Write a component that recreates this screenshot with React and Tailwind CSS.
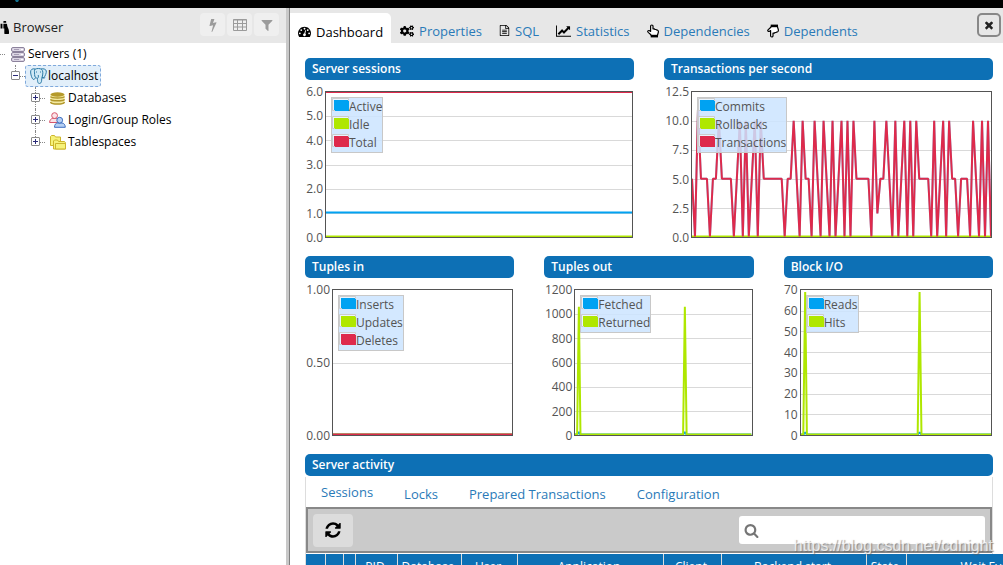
import React from "react";
import { FaCogs, FaBinoculars } from "react-icons/fa";

const GLYPHS = {
  dashboard:
    "M384 1152q0-53-37.5-90.5t-90.5-37.5-90.5 37.5-37.5 90.5 37.5 90.5 90.5 37.5 90.5-37.5 37.5-90.5zm192-448q0-53-37.5-90.5t-90.5-37.5-90.5 37.5-37.5 90.5 37.5 90.5 90.5 37.5 90.5-37.5 37.5-90.5zm428 481l101-382q6-26-7.5-48.5t-38.5-29.5-48 6.5-30 39.5l-101 382q-60 5-107 43.5t-63 98.5q-20 77 20 146t117 89 146-20 89-117q16-60-6-117t-72-91zm660-33q0-53-37.5-90.5t-90.5-37.5-90.5 37.5-37.5 90.5 37.5 90.5 90.5 37.5 90.5-37.5 37.5-90.5zm-640-640q0-53-37.5-90.5t-90.5-37.5-90.5 37.5-37.5 90.5 37.5 90.5 90.5 37.5 90.5-37.5 37.5-90.5zm448 192q0-53-37.5-90.5t-90.5-37.5-90.5 37.5-37.5 90.5 37.5 90.5 90.5 37.5 90.5-37.5 37.5-90.5zm320 448q0 261-141 483-19 29-54 29h-1402q-35 0-54-29-141-221-141-483 0-182 71-348t191-286 286-191 348-71 348 71 286 191 191 286 71 348z",
  file:
    "M1596 380q28 28 48 76t20 88v1152q0 40-28 68t-68 28h-1344q-40 0-68-28t-28-68v-1600q0-40 28-68t68-28h896q40 0 88 20t76 48zm-444-244v376h376q-10-29-22-41l-313-313q-12-12-41-22zm384 1528v-1024h-416q-40 0-68-28t-28-68v-416h-768v1536h1280zm-1024-864q0-14 9-23t23-9h704q14 0 23 9t9 23v64q0 14-9 23t-23 9h-704q-14 0-23-9t-9-23v-64zm736 224q14 0 23 9t9 23v64q0 14-9 23t-23 9h-704q-14 0-23-9t-9-23v-64q0-14 9-23t23-9h704zm0 256q14 0 23 9t9 23v64q0 14-9 23t-23 9h-704q-14 0-23-9t-9-23v-64q0-14 9-23t23-9h704z",
  chart:
    "M2048 1536v128h-2048v-1536h128v1408h1920zm-128-1248v435q0 21-19.5 29.5t-35.5-7.5l-121-121-633 633q-10 10-23 10t-23-10l-233-233-416 416-192-192 585-585q10-10 23-10t23 10l233 233 464-464-121-121q-16-16-7.5-35.5t29.5-19.5h435q14 0 23 9t9 23z",
  filter:
    "M1595 295q17 41-14 70l-493 493v742q0 42-39 59-13 5-25 5-27 0-45-19l-256-256q-19-19-19-45v-486l-493-493q-31-29-14-70 17-39 59-39h1280q42 0 59 39z",
  bolt:
    "M1333 566q18 20 7 44l-540 1157q-13 25-42 25-4 0-14-2-17-5-25.5-19t-4.5-30l197-808-406 101q-4 1-12 1-18 0-31-11-18-15-13-39l201-825q4-14 16-23t28-9h328q19 0 32 12.5t13 29.5q0 8-5 18l-171 463 396-98q8-2 12-2 19 0 34 15z",
  times:
    "M1490 1322q0 40-28 68l-136 136q-28 28-68 28t-68-28l-294-294-294 294q-28 28-68 28t-68-28l-136-136q-28-28-28-68t28-68l294-294-294-294q-28-28-28-68t28-68l136-136q28-28 68-28t68 28l294 294 294-294q28-28 68-28t68 28l136 136q28 28 28 68t-28 68l-294 294 294 294q28 28 28 68z",
  refresh:
    "M1639 1056q0 5-1 7-64 268-268 434.5t-478 166.5q-146 0-282.5-55t-243.5-157l-129 129q-19 19-45 19t-45-19-19-45v-448q0-26 19-45t45-19h448q26 0 45 19t19 45-19 45l-137 137q71 66 161 102t187 36q134 0 250-65t186-179q11-17 53-117 8-23 30-23h192q13 0 22.5 9.5t9.5 22.5zm25-800v448q0 26-19 45t-45 19h-448q-26 0-45-19t-19-45 19-45l138-138q-148-137-349-137-134 0-250 65t-186 179q-11 17-53 117-8 23-30 23h-199q-13 0-22.5-9.5t-9.5-22.5v-7q65-268 270-434.5t480-166.5q146 0 284 55.5t245 156.5l130-129q19-19 45-19t45 19 19 45z",
  search:
    "M1216 832q0-185-131.5-316.5t-316.5-131.5-316.5 131.5-131.5 316.5 131.5 316.5 316.5 131.5 316.5-131.5 131.5-316.5zm512 832q0 52-38 90t-90 38q-54 0-90-38l-343-342q-179 124-399 124-143 0-273.5-55.5t-225-150-150-225-55.5-273.5 55.5-273.5 150-225 225-150 273.5-55.5 273.5 55.5 225 150 150 225 55.5 273.5q0 220-124 399l343 343q37 37 37 90z",
};

function Glyph({ name, className, wide }) {
  return (
    <svg className={className} viewBox={wide ? "0 0 2048 1792" : "0 0 1792 1792"} fill="currentColor" aria-hidden="true">
      <path d={GLYPHS[name]} />
    </svg>
  );
}

function Hand({ down }) {
  return (
    <svg className={down ? "h-[14px] w-3 -scale-y-100" : "h-[14px] w-3"} viewBox="0 0 12 14" aria-hidden="true">
      <path
        d="M3.6 7.4V2.2a1.2 1.2 0 0 1 2.4 0v2.6l1.4.1.4.5 1.4.1.3.5 1.1.2c.5.2.8.6.8 1.2 0 1.900-.9 2.600-.9 4.100H4.300C3.700 10.200 2 9.400.9 8c-.5-.9.3-1.700 1.300-1.400z"
        fill="#fff"
        stroke="#000"
        strokeWidth="1.200"
        strokeLinejoin="round"
      />
      <path d="M3.700 10.800h7.300v2.600H3.700z" fill="#000" />
    </svg>
  );
}

function TableGlyph() {
  return (
    <svg className="h-3 w-[14px]" viewBox="0 0 14 12" fill="none" stroke="currentColor" aria-hidden="true">
      <path d="M.5.500h13v11H.5zM.5 1h13M.5 4.500h13M.5 8h13M4.500 1v10.500M9.500 1v10.500" />
    </svg>
  );
}

function ServersIcon() {
  return (
    <svg className="h-[15px] w-[14px]" viewBox="0 0 14 15" aria-hidden="true">
      {[0.5, 5.500, 10.500].map((y) => (
        <g key={y}>
          <rect x=".5" y={y} width="13" height="4" rx="1.500" fill="#dcd6e4" stroke="#8c829c" />
          <path d={`M3 ${y + 2}h5`} stroke="#a79db5" />
          <path d={`M10 ${y + 2}h2`} stroke="#fff" />
        </g>
      ))}
    </svg>
  );
}

function PostgresIcon() {
  return (
    <svg className="h-4 w-[17px]" viewBox="0 0 17 16" fill="#cfe9f6" stroke="#2e7ba6" strokeLinejoin="round" aria-hidden="true">
      <path d="M5 1C2.500.3.500 1.500.600 4c.1 2.500 1.200 6.500 2.600 7.400 1.100.500 2-1 2.600-2z" />
      <path d="M11 1c2-.7 5 .1 5.300 2 .3 2-1.200 5.200-2.500 6.700l-1.800.2z" />
      <path d="M5 1.200C7 .2 10 .200 11.700 1.400c1.300 1.300 1.400 4 .700 6.600l-.700 2.600c0 2-.1 4.600-1.900 4.900-1.900.3-2.300-1.500-2.400-5.200C5.900 10 4.500 9 4.600 6.500 4.600 4.300 4 2.500 5 1.200z" />
      <path d="M7.500 10.300c1.200-.600 1-2 .7-3.300M12.200 9.600c1 .6 2.400.4 3 0M6 4h1M10 4h1" fill="none" />
    </svg>
  );
}

function DatabasesIcon() {
  return (
    <svg className="h-[13px] w-[15px]" viewBox="0 0 15 13" aria-hidden="true">
      <path d="M.5 2.500v8c0 1 3 2 7 2s7-1 7-2v-8z" fill="#f3e9a0" />
      <ellipse cx="7.500" cy="2.500" rx="7" ry="2.200" fill="#b59a2b" />
      <path
        d="M.5 4.500c1 2 13 2 14 0M.5 7.300c1 2 13 2 14 0M.5 10c1 2.700 13 2.700 14 0"
        fill="none"
        stroke="#b1972c"
        strokeWidth="1.500"
      />
    </svg>
  );
}

function RolesIcon() {
  return (
    <svg className="h-4 w-[17px]" viewBox="0 0 17 16" aria-hidden="true">
      <g fill="#fbe3e7" stroke="#d5566c">
        <path d="M.6 10.500c0-2.500 1.500-4 3-4h4c1.500 0 2.500 1.500 2.500 4z" />
        <circle cx="5.600" cy="3.600" r="2.900" />
      </g>
      <g fill="#b7d0f3" stroke="#3f6fc0">
        <path d="M5.500 15.300c0-2.500 1.200-4.300 3-4.300h4.500c1.800 0 3.300 1.800 3.300 4.300z" />
        <circle cx="10.700" cy="8.200" r="2.900" />
      </g>
    </svg>
  );
}

function FoldersIcon() {
  return (
    <svg className="h-[15px] w-4" viewBox="0 0 16 15" fill="#f6f27a" stroke="#cdb52c" strokeLinejoin="round" aria-hidden="true">
      <path d="M.5 10.500v-9l1-1h3l1 1.500h5v8.500z" />
      <path d="M3.500 14V6l1-1h3l1 1.500h6l.8.800V14z" />
      <path d="M5.500 14V8.500h10V14z" />
    </svg>
  );
}

function Expander({ open, above, below }) {
  return (
    <span className="flex h-[22px] w-[9px] flex-col items-center">
      <span className={above ? "h-[6px] w-0 border-l border-dotted border-[#888]" : "h-[6px] w-0"} />
      <button
        type="button"
        aria-label={open ? "Collapse" : "Expand"}
        className="flex h-[9px] w-[9px] items-center justify-center rounded-[1px] border border-[#8a8a8a] bg-white"
      >
        <svg className="h-[5px] w-[5px]" viewBox="0 0 5 5" stroke="#2b2b78" aria-hidden="true">
          <path d={open ? "M0 2.500h5" : "M0 2.500h5M2.500 0v5"} />
        </svg>
      </button>
      <span className={below ? "w-0 flex-1 border-l border-dotted border-[#888]" : "w-0 flex-1"} />
    </span>
  );
}

function Branch() {
  return <span className="w-[5px] border-t border-dotted border-[#888]" />;
}

const NODES = [
  { label: "Databases", Icon: DatabasesIcon },
  { label: "Login/Group Roles", Icon: RolesIcon },
  { label: "Tablespaces", Icon: FoldersIcon },
];

function Sidebar() {
  const tool = "flex h-[23px] w-[25px] items-center justify-center rounded bg-[#efefef] text-[#9b9b9b]";
  return (
    <aside className="flex w-[286px] shrink-0 flex-col bg-white">
      <header className="flex h-[35px] items-start bg-[#e7e7e7] pr-[7px] pt-[5px]">
        <span className="flex h-7 min-w-0 flex-1 items-center gap-1 overflow-hidden">
          <FaBinoculars className="-ml-[6px] h-[15px] w-[15px] shrink-0" />
          <h2 className="text-[#222]">Browser</h2>
        </span>
        <span className="flex gap-[2px]">
          <button type="button" aria-label="Query tool" className={tool}>
            <Glyph name="bolt" className="h-[14px] w-[14px]" />
          </button>
          <button type="button" aria-label="View data" className={tool}>
            <TableGlyph />
          </button>
          <button type="button" aria-label="Filtered rows" className={tool}>
            <Glyph name="filter" className="h-[14px] w-[14px]" />
          </button>
        </span>
      </header>
      <ul className="text-xs text-black">
        <li>
          <div className="flex h-[22px] items-center">
            <Branch />
            <span className="flex w-[23px] justify-center pl-[2px]">
              <ServersIcon />
            </span>
            Servers (1)
          </div>
          <ul>
            <li>
              <div className="flex h-[22px] items-center pl-[11px]">
                <Expander open above />
                <Branch />
                <span className="flex h-[22px] items-center gap-[1px] rounded-[3px] border border-dashed border-[#7fa9dc] bg-[#e2effa] pl-1 pr-[2px]">
                  <PostgresIcon />
                  localhost
                </span>
              </div>
              <ul>
                {NODES.map(({ label, Icon }, i) => (
                  <li key={label} className="flex h-[22px] items-center pl-[31px]">
                    <Expander above below={i < NODES.length - 1} />
                    <Branch />
                    <span className="flex w-[23px] justify-center pl-[2px]">
                      <Icon />
                    </span>
                    {label}
                  </li>
                ))}
              </ul>
            </li>
          </ul>
        </li>
      </ul>
    </aside>
  );
}

const TABS = [
  { label: "Properties", icon: <FaCogs className="h-[14px] w-[14px] text-black" /> },
  { label: "SQL", icon: <Glyph name="file" className="h-[13px] w-[11px] text-black" /> },
  { label: "Statistics", icon: <Glyph name="chart" wide className="h-[14px] w-[15px] text-black" /> },
  { label: "Dependencies", icon: <Hand /> },
  { label: "Dependents", icon: <Hand down /> },
];

function TabBar() {
  return (
    <nav className="flex h-[35px] items-start bg-[#e7e7e7] pt-[5px]">
      <a href="#dashboard" className="flex h-[30px] items-center gap-[5px] rounded-tr-[5px] bg-white pl-2 pr-2 pt-[7px] leading-[18px] text-black">
        <Glyph name="dashboard" className="h-[13px] w-[13px]" />
        Dashboard
      </a>
      <span className="flex h-[30px] flex-1 items-center gap-[17px] pl-[9px] pt-[5px]">
        {TABS.map((t) => (
          <a key={t.label} href={`#${t.label.toLowerCase()}`} className="flex items-center gap-[5px] text-[#2a7ab8]">
            {t.icon}
            {t.label}
          </a>
        ))}
      </span>
      <button
        type="button"
        aria-label="Close panel"
        className="mr-[2px] flex h-6 w-6 items-center justify-center rounded-[5px] border-2 border-[#888] text-[#222]"
      >
        <Glyph name="times" className="h-3 w-3" />
      </button>
    </nav>
  );
}

const BLUE = "#00a2f2";
const LIME = "#afe700";
const RED = "#de2a4c";

const TPS = [
  5, 0, 11, 5, 5, 5, 0, 5, 5, 10, 5, 5, 5, 5, 0, 5, 10, 0, 10, 0, 5, 10, 0, 10, 5, 5, 5, 5, 5, 5, 5, 0, 5, 5, 10, 5, 0,
  10, 5, 5, 0, 10, 5, 0, 10, 5, 0, 10, 0, 5, 10, 0, 10, 0, 10, 5, 5, 5, 5, 5, 0, 10, 2, 5, 5, 10, 5, 0, 10, 0, 5, 10, 0,
  10, 0, 10, 5, 5, 5, 5, 0, 10, 0, 5, 10, 0, 10, 5, 5, 0, 5, 5, 5, 0, 10, 5, 0, 10, 0, 10, 0,
].map((v, i) => [i, v]);

const flat = (v) => [[0, v], [100, v]];
const spikes = (v) => [[0, 0], [1.200, 0], [2.200, v], [3.100, 0], [61.300, 0], [62.300, v], [63.300, 0], [100, 0]];

function Swatch({ color }) {
  return (
    <svg className="h-[18px] w-[17px] shrink-0" viewBox="0 0 17 18" aria-hidden="true">
      <path d="M.5.500h16v12H.5z" fill="#fff" fillOpacity=".5" stroke="#ccc" />
      <path d="M2 2h14v1h1v10H3v-1H2z" fill={color} />
    </svg>
  );
}

function Chart({ title, ticks, max, tickWidth, series }) {
  const H = 145;
  const y = (v) => (1 - v / max) * (H - 0.5);
  const n = ticks.length - 1;
  return (
    <section>
      <h3 className={BAR}>{title}</h3>
      <div className="flex pr-px pt-[3px] text-xs">
        <div className={`${tickWidth} flex h-[164px] shrink-0 flex-col justify-between pr-[2px] text-right leading-[18px] text-[#545454]`}>
          {ticks.map((t) => (
            <span key={t}>{t}</span>
          ))}
        </div>
        <div className="relative mt-[8px] h-[147px] min-w-0 flex-1 border border-[#545454]">
          <svg
            className="block h-full w-full"
            viewBox={`0 0 100 ${H}`}
            preserveAspectRatio="none"
            role="img"
            aria-label={title}
          >
            {ticks.slice(1, n).map((t, i) => (
              <path key={t} d={`M0 ${Math.round((H * (i + 1)) / n) + 0.5}H100`} stroke="#d9d9d9" vectorEffect="non-scaling-stroke" />
            ))}
            {series.map((s) => (
              <polyline
                key={s.name}
                points={s.data.map(([a, b]) => `${a},${y(b)}`).join(" ")}
                fill="none"
                stroke={s.color}
                strokeOpacity={s.opacity ?? 1}
                strokeWidth="2"
                strokeLinejoin="bevel"
                vectorEffect="non-scaling-stroke"
              />
            ))}
          </svg>
          <ul className="absolute left-[5px] top-[5px] border border-[#c8c8c8] bg-[#cbe4ff]/85 text-[#545454]">
            {series.map((s) => (
              <li key={s.name} className="flex h-[18px] leading-[18px]">
                <Swatch color={s.color} />
                {s.name}
              </li>
            ))}
          </ul>
        </div>
      </div>
    </section>
  );
}

const BAR = "h-[22px] rounded-[5px] bg-[#0d70b5] px-[7px] text-xs leading-[21px] font-semibold text-white";

const COLUMNS = [
  ["", "w-[19px]"],
  ["", "w-[18px]"],
  ["", "w-3"],
  ["PID", "w-[42px]"],
  ["Database", "w-16"],
  ["User", "w-14"],
  ["Application", "w-[146px]"],
  ["Client", "w-[58px]"],
  ["Backend start", "w-[145px]"],
  ["State", "w-10"],
  ["Wait Event", "w-[170px]"],
];

function Activity() {
  const sub = "text-[#2a7ab8]";
  return (
    <section className="mt-[9px]">
      <h3 className={BAR}>Server activity</h3>
      <div className="mt-px border-x border-[#ddd]">
        <nav className="flex h-[30px] items-center gap-[31px] pl-[15px]">
          <a href="#sessions" className={`${sub} pb-[1px]`}>Sessions</a>
          <a href="#locks" className={`${sub} pt-[3px]`}>Locks</a>
          <a href="#prepared" className={`${sub} pt-[3px]`}>Prepared Transactions</a>
          <a href="#configuration" className={`${sub} pt-[3px]`}>Configuration</a>
        </nav>
        <div className="flex h-[46px] items-center justify-between border-2 border-[#888] bg-[#cacaca] px-[5px]">
          <button type="button" aria-label="Refresh" className="flex h-[33px] w-10 items-center justify-center rounded bg-[#dcdcdc] text-black">
            <Glyph name="refresh" className="h-[18px] w-[18px]" />
          </button>
          <label className="flex h-7 w-[246px] items-center rounded-[3px] bg-white px-[5px] text-[#757575]">
            <Glyph name="search" className="h-[15px] w-[15px]" />
            <input type="search" aria-label="Search" className="min-w-0 flex-1 bg-transparent px-1 outline-none" />
          </label>
        </div>
        <table className="mt-px w-[770px] table-fixed border-collapse bg-[#0d70b5] text-xs text-white">
          <thead>
            <tr>
              {COLUMNS.map(([label, width], i) => (
                <th key={i} scope="col" className={`${width} h-[26px] whitespace-nowrap border-r border-[#ddd] p-0 pr-[2px] font-normal`}>
                  {label}
                </th>
              ))}
            </tr>
          </thead>
        </table>
      </div>
    </section>
  );
}

export default function App() {
  return (
    <div className="relative flex h-screen flex-col overflow-hidden bg-white font-['Open_Sans','Noto_Sans',sans-serif] text-[13px] leading-[18px]">
      <div className="h-2 shrink-0 bg-black pl-[15px]">
        <svg className="h-[2px] w-1" viewBox="0 0 4 2" aria-hidden="true">
          <path d="M0 0h4L3 2H1z" fill="#12708f" />
        </svg>
      </div>
      <div className="flex min-h-0 flex-1">
        <Sidebar />
        <div className="w-1 shrink-0 border-r border-[#808080] bg-[#c8c8c8]" />
        <main className="min-w-0 flex-1">
          <TabBar />
          <div className="pl-[15px] pr-[10px] pt-[15px]">
            <div className="grid grid-cols-2 gap-x-[30px]">
              <Chart
                title="Server sessions"
                ticks={["6.0", "5.0", "4.0", "3.0", "2.0", "1.0", "0.0"]}
                max={6}
                tickWidth="w-5"
                series={[
                  { name: "Active", color: BLUE, data: flat(1) },
                  { name: "Idle", color: LIME, data: flat(0) },
                  { name: "Total", color: RED, data: flat(6) },
                ]}
              />
              <Chart
                title="Transactions per second"
                ticks={["12.5", "10.0", "7.5", "5.0", "2.5", "0.0"]}
                max={12.500}
                tickWidth="w-[27px]"
                series={[
                  { name: "Commits", color: BLUE, data: TPS, opacity: 0.5 },
                  { name: "Rollbacks", color: LIME, data: flat(0) },
                  { name: "Transactions", color: RED, data: TPS },
                ]}
              />
            </div>
            <div className="mt-[9px] grid grid-cols-3 gap-x-[30px]">
              <Chart
                title="Tuples in"
                ticks={["1.00", "0.50", "0.00"]}
                max={1}
                tickWidth="w-[27px]"
                series={[
                  { name: "Inserts", color: BLUE, data: flat(0) },
                  { name: "Updates", color: LIME, data: flat(0) },
                  { name: "Deletes", color: RED, data: flat(0) },
                ]}
              />
              <Chart
                title="Tuples out"
                ticks={["1200", "1000", "800", "600", "400", "200", "0"]}
                max={1200}
                tickWidth="w-[30px]"
                series={[
                  { name: "Fetched", color: BLUE, data: spikes(20) },
                  { name: "Returned", color: LIME, data: spikes(1060) },
                ]}
              />
              <Chart
                title="Block I/O"
                ticks={["70", "60", "50", "40", "30", "20", "10", "0"]}
                max={70}
                tickWidth="w-4"
                series={[
                  { name: "Reads", color: BLUE, data: spikes(1) },
                  { name: "Hits", color: LIME, data: spikes(69) },
                ]}
              />
            </div>
            <Activity />
          </div>
        </main>
      </div>
      <p className="absolute bottom-[9px] right-[10px] font-['Liberation_Sans',sans-serif] text-base leading-5 text-white/75 [text-shadow:1px_1px_1px_rgba(90,90,90,0.6)]">
        https://blog.csdn.net/cdnight
      </p>
    </div>
  );
}
